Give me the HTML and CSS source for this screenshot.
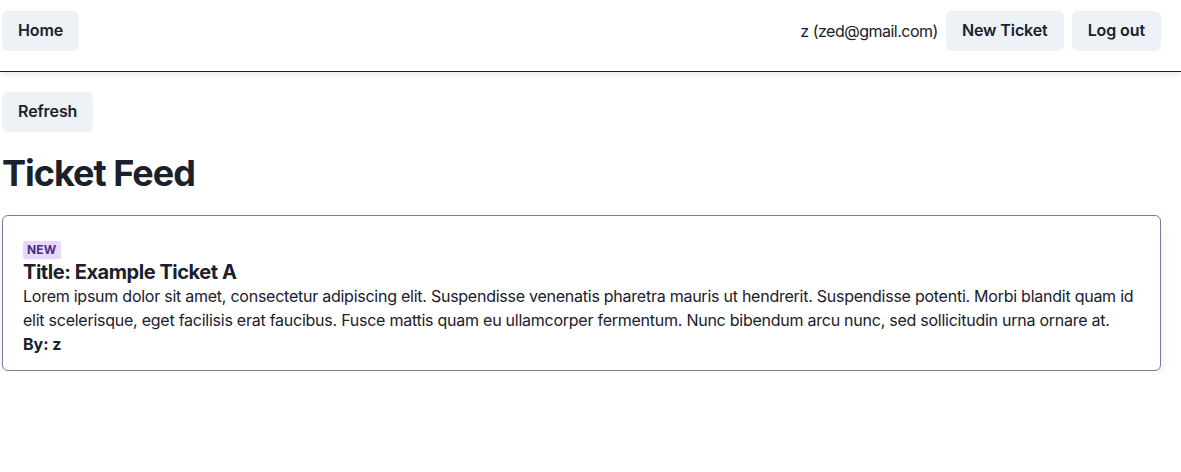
FILE: index.html
```html
<!DOCTYPE html>
<html lang="en">
<head>
<meta charset="utf-8">
<title>Ticket Feed</title>
<link rel="stylesheet" href="styles.css">
</head>
<body>
<header class="nav">
  <button class="btn">Home</button>
  <div class="nav-right">
    <span class="user">z (zed@gmail.com)</span>
    <button class="btn">New Ticket</button>
    <button class="btn">Log out</button>
  </div>
</header>
<main class="main">
  <div class="toolbar">
    <button class="btn">Refresh</button>
  </div>
  <h1 class="page-title">Ticket Feed</h1>
  <article class="card">
    <div class="badge-row"><span class="badge">New</span></div>
    <h2 class="ticket-title">Title: Example Ticket A</h2>
    <p class="ticket-body">Lorem ipsum dolor sit amet, consectetur adipiscing elit. Suspendisse venenatis pharetra mauris ut hendrerit. Suspendisse potenti. Morbi blandit quam id elit scelerisque, eget facilisis erat faucibus. Fusce mattis quam eu ullamcorper fermentum. Nunc bibendum arcu nunc, sed sollicitudin urna ornare at.</p>
    <p class="ticket-by">By: z</p>
  </article>
</main>
</body>
</html>
```
FILE: styles.css
```css
* { box-sizing: border-box; }
html, body { margin: 0; padding: 0; }
body {
  font-family: Inter, "Liberation Sans", sans-serif;
  color: #1A202C;
  font-size: 16px;
  line-height: 1.5;
  background: #fff;
}
.btn {
  font-family: inherit;
  font-size: 16px;
  font-weight: 600;
  color: #1A202C;
  background: #EDF2F7;
  border: none;
  border-radius: 6px;
  height: 40px;
  padding: 0 16px;
  line-height: 1.2;
  letter-spacing: -0.1px;
  cursor: pointer;
}
.nav {
  display: flex;
  justify-content: space-between;
  align-items: center;
  padding: 11px 20px 20px 2px;
  border-bottom: 1px solid #1A202C;
  box-shadow: 0 4px 6px -1px rgba(0,0,0,0.06), 0 2px 4px -1px rgba(0,0,0,0.04);
}
.nav-right {
  display: flex;
  align-items: center;
  gap: 8px;
}
.user { letter-spacing: -0.5px; }
.main {
  padding: 20px 20px 0 2px;
}
.toolbar { display: flex; }
.page-title {
  margin: 20px 0 20px;
  font-size: 36px;
  font-weight: 700;
  line-height: 1.2;
  letter-spacing: -1px;
}
.card {
  border: 1px solid #718096;
  border-radius: 6px;
  padding: 20px 20px 14px;
  box-shadow: 0 10px 15px -3px rgba(0,0,0,0.1), 0 4px 6px -2px rgba(0,0,0,0.05);
}
.badge-row { line-height: 1.5; }
.badge {
  display: inline-block;
  font-size: 12px;
  font-weight: 700;
  text-transform: uppercase;
  background: #E9D8FD;
  color: #44337A;
  padding: 0 4px;
  border-radius: 2px;
  line-height: 1.5;
  vertical-align: middle;
  letter-spacing: 0.2px;
}
.ticket-title {
  margin: 0;
  font-size: 20px;
  font-weight: 700;
  line-height: 1.2;
  letter-spacing: -0.45px;
}
.ticket-body { margin: 0; letter-spacing: -0.25px; }
.ticket-by { margin: 0; font-weight: 700; }
```
